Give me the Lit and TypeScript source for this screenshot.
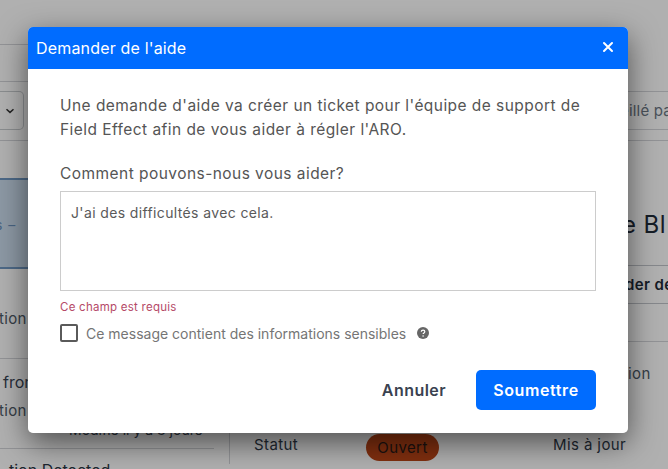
import { LitElement, html, css } from "lit";
import { customElement } from "lit/decorators.js";

@customElement("app-root")
export class AppRoot extends LitElement {
  static styles = css`
    :host { display: block; width: 668px; height: 469px; position: relative; overflow: hidden; background: #fff; font-family: Inter, "Noto Sans", sans-serif; color: #3a4656; }
    * { box-sizing: border-box; }
    .page { display: flex; height: 469px; overflow: hidden; }
    .left { width: 214px; flex: none; display: flex; flex-direction: column; }
    .left > *, .right > * { flex: none; }
    .right { flex: 1; min-width: 0; margin-left: 15px; display: flex; flex-direction: column; overflow: hidden; white-space: nowrap; }
    .line { border-bottom: 1px solid #d4d6d9; }
    .l1 { height: 45px; }
    .l2 { height: 37px; }
    .l3 { height: 59px; padding-top: 9px; }
    .select { width: 24px; height: 39px; border: 1px solid #c9ccd0; border-left: none; border-radius: 0 5px 5px 0; display: flex; align-items: center; padding-left: 5px; }
    .select svg { display: block; }
    .card { margin-top: 37px; height: 91px; background: #cbdcee; border-top: 2px solid #7099c4; border-bottom: 2px solid #7099c4; display: flex; align-items: center; justify-content: flex-start; font-size: 14px; color: #6a92bd; padding-top: 1px; }
    .card span { margin-left: -5px; letter-spacing: 1px; }
    .t { font-size: 15px; letter-spacing: 0.3px; line-height: 20px; white-space: nowrap; color: #4e5a68; }
    .l4 { padding-top: 40px; height: 90px; }
    .l4 .t { margin-left: -1px; }
    .l5 { height: 90px; padding-top: 13px; display: flex; flex-direction: column; }
    .from { font-size: 16px; margin-left: 3px; color: #3a4656; line-height: 20px; }
    .l5b { margin-left: -1px; margin-top: 9px; }
    .mod { margin-left: 69px; margin-top: 0; font-size: 14px; color: #3a4656; line-height: 18px; }
    .det { margin: 11px 0 0 9px; font-size: 16px; line-height: 20px; color: #2c3644; white-space: nowrap; }
    .r0 { height: 92px; }
    .r1 { height: 38px; font-size: 15px; color: #6b7683; line-height: 37px; padding-left: 391px; letter-spacing: .2px; }
    .r2 { height: 11px; }
    .r3 { height: 125px; padding-top: 69px; font-size: 24px; line-height: 30px; color: #1f2a38; padding-left: 393px; letter-spacing: .4px; }
    .r4 { height: 39px; font-size: 15px; font-weight: 600; line-height: 38px; color: #1f2a38; padding-left: 396px; border-top: 1px solid #c2c6cb; border-bottom: 1px solid #c2c6cb; margin-top: -1px; letter-spacing: .4px; }
    .r5 { height: 38px; }
    .r6 { height: 86px; padding-top: 22px; font-size: 15px; line-height: 20px; color: #4e5a68; padding-left: 399px; letter-spacing: .4px; }
    .r7 { display: flex; align-items: center; height: 36px; border-left: 1px solid #d4d6d9; font-size: 15px; letter-spacing: .4px; color: #303b4a; padding-top: 2px; }
    .r7 .st { margin-left: 24px; width: 112px; margin-top: -5px; }
    .r7 .maj { margin-top: -5px; }
    .badge { width: 73px; height: 27px; border-radius: 14px; background: #bb4517; display: flex; align-items: center; justify-content: center; color: #2a1a18; margin-right: 114px; }
    .backdrop { position: absolute; inset: 0; background: rgba(0, 0, 0, .31); }
    .modal { position: absolute; left: 28px; top: 27px; width: 600px; height: 406px; background: #fff; border-radius: 5px; overflow: hidden; display: flex; flex-direction: column; }
    .shadow { position: absolute; left: 28px; top: 27px; width: 600px; height: 406px; border-radius: 5px; box-shadow: 0 10px 30px rgba(0, 0, 0, .55); }
    .head { height: 42px; flex: none; background: #006cff; color: #fff; display: flex; align-items: center; justify-content: space-between; padding: 0 14px 0 8px; font-size: 16px; line-height: 20px; letter-spacing: .17px; }
    .head svg { display: block; margin-top: -2px; }
    .body { flex: 1; display: flex; flex-direction: column; padding: 25px 32px 23px; color: #4a4a4a; }
    .p { margin: 0; font-size: 15.5px; line-height: 24px; letter-spacing: 0.45px; color: #555; }
    .q { margin: 20px 0 5px; font-size: 15.5px; line-height: 24px; letter-spacing: 0.45px; color: #555; }
    .ta { height: 100px; border: 1px solid #ccc; padding: 11px 10px; font-size: 14px; line-height: 20px; letter-spacing: 0.37px; color: #5a5a5a; }
    .err { margin-top: 9px; font-size: 11.5px; line-height: 15px; letter-spacing: 0.25px; color: #b54a68; }
    .chk { display: flex; align-items: center; margin-top: 8px; height: 20px; font-size: 14px; color: #757575; }
    .box { width: 18px; height: 18px; border: 2px solid #5a5a5a; border-radius: 2px; margin-right: 8px; flex: none; }
    .help { margin-left: 11px; display: block; }
    .actions { margin-top: auto; display: flex; justify-content: flex-end; align-items: center; }
    .cancel { font-size: 16px; font-weight: 600; letter-spacing: .45px; color: #3a4250; margin-right: 30px; }
    .submit { width: 120px; height: 40px; border-radius: 5px; background: #006cff; color: #fff; font-size: 16px; font-weight: 600; letter-spacing: .6px; display: flex; align-items: center; justify-content: center; }
  `;

  render() {
    return html`
      <div class="page">
        <div class="left">
          <div class="l1 line"></div>
          <div class="l2 line"></div>
          <div class="l3 line">
            <div class="select">
              <svg width="10" height="6" viewBox="0 0 10 6"><path d="M1.5 1.2 5 4.4l3.5-3.2" fill="none" stroke="#333" stroke-width="1.5"/></svg>
            </div>
          </div>
          <div class="card"><span>s –</span></div>
          <div class="l4 line"><div class="t">tion –</div></div>
          <div class="l5 line">
            <div class="from">from</div>
            <div class="t l5b">tion –</div>
            <div class="mod">Modifié il y a 8 jours</div>
          </div>
          <div class="det">tion Detected</div>
        </div>
        <div class="right">
          <div class="r0 line"></div>
          <div class="r1 line">eillé pa</div>
          <div class="r2 line"></div>
          <div class="r3">e Bl</div>
          <div class="r4">der de</div>
          <div class="r5 line"></div>
          <div class="r6">ion</div>
          <div class="r7">
            <span class="st">Statut</span>
            <span class="badge">Ouvert</span>
            <span class="maj">Mis à jour</span>
          </div>
        </div>
      </div>
      <div class="backdrop"></div>
      <div class="shadow"></div>
      <div class="modal">
        <div class="head">
          <span>Demander de l'aide</span>
          <svg width="12" height="12" viewBox="0 0 12 12"><path d="M2 2l8 8M10 2l-8 8" stroke="#fff" stroke-width="2" stroke-linecap="round"/></svg>
        </div>
        <div class="body">
          <p class="p">Une demande d'aide va créer un ticket pour l'équipe de support de<br>Field Effect afin de vous aider à régler l'ARO.</p>
          <div class="q">Comment pouvons-nous vous aider?</div>
          <div class="ta">J'ai des difficultés avec cela.</div>
          <div class="err">Ce champ est requis</div>
          <div class="chk">
            <span class="box"></span>
            <span>Ce message contient des informations sensibles</span>
            <svg class="help" width="12" height="12" viewBox="0 0 12 12"><circle cx="6" cy="6" r="6" fill="#666"/><path d="M4.3 4.7c0-1 .8-1.6 1.8-1.6s1.7.6 1.7 1.5c0 1.3-1.7 1.3-1.7 2.5" fill="none" stroke="#fff" stroke-width="1.2"/><circle cx="6.1" cy="9" r=".8" fill="#fff"/></svg>
          </div>
          <div class="actions">
            <span class="cancel">Annuler</span>
            <span class="submit">Soumettre</span>
          </div>
        </div>
      </div>
    `;
  }
}
